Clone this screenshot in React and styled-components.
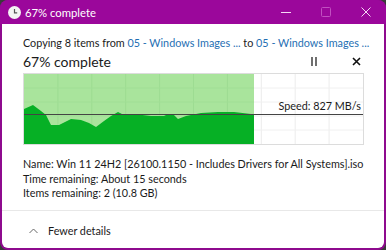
import styled, { createGlobalStyle } from "styled-components";

const GlobalStyle = createGlobalStyle`
    html, body {
        margin: 0;
        padding: 0;
        background: #3a3a3a;
    }
    body {
        width: 386px;
        height: 250px;
        overflow: hidden;
        font-family: Lato, sans-serif;
    }
`;

const speedPoints = [
    [0, 35], [9, 31], [17, 37], [22, 41], [27, 51], [35, 51], [47, 45],
    [57, 46], [65, 49], [72, 53], [80, 47], [87, 42], [94, 38], [100, 41],
    [110, 40], [127, 42], [140, 42], [144, 40], [149, 40], [154, 45],
    [162, 42], [177, 39], [194, 38], [210, 38], [227, 40], [230, 40],
];

export default function App() {
    const progressWidth = 230;
    const area =
        "M" +
        speedPoints.map(([x, y]) => `${x},${y}`).join(" L") +
        ` L${progressWidth},70 L0,70 Z`;

    return (
        <>
            <GlobalStyle />
            <StyledWindow>
                <StyledTitleBar>
                    <StyledTitle>
                        <svg width="13" height="13" viewBox="0 0 13 13">
                            <circle cx="6.5" cy="6.5" r="6.5" fill="#f4f4f4" />
                            <path
                                d="M6.5 3 V6.8 H9.2"
                                stroke="#555"
                                strokeWidth="1.2"
                                fill="none"
                            />
                        </svg>
                        67% complete
                    </StyledTitle>
                    <StyledControls>
                        <StyledControl>
                            <svg width="10" height="10" viewBox="0 0 10 10">
                                <path d="M0 5.5 H10" stroke="#f6d8f6" strokeWidth="1" />
                            </svg>
                        </StyledControl>
                        <StyledControl>
                            <svg width="10" height="10" viewBox="0 0 10 10">
                                <rect
                                    x="0.5"
                                    y="0.5"
                                    width="9"
                                    height="9"
                                    rx="1"
                                    stroke="#c150c1"
                                    fill="none"
                                />
                            </svg>
                        </StyledControl>
                        <StyledControl>
                            <svg width="10" height="10" viewBox="0 0 10 10">
                                <path
                                    d="M0.5 0.5 L9.5 9.5 M9.5 0.5 L0.5 9.5"
                                    stroke="#f6d8f6"
                                    strokeWidth="1"
                                />
                            </svg>
                        </StyledControl>
                    </StyledControls>
                </StyledTitleBar>

                <StyledBody>
                    <StyledMain>
                        <StyledLine>
                            Copying 8 items from{" "}
                            <StyledLink>05 - Windows Images ...</StyledLink> to{" "}
                            <StyledLink>05 - Windows Images ...</StyledLink>
                        </StyledLine>

                        <StyledHeader>
                            <span>67% complete</span>
                            <StyledActions>
                                <svg width="8" height="9" viewBox="0 0 8 9">
                                    <path
                                        d="M2 0 V9 M6 0 V9"
                                        stroke="#222"
                                        strokeWidth="1.3"
                                    />
                                </svg>
                                <svg width="9" height="9" viewBox="0 0 9 9">
                                    <path
                                        d="M1 1 L8 8 M8 1 L1 8"
                                        stroke="#111"
                                        strokeWidth="1.6"
                                    />
                                </svg>
                            </StyledActions>
                        </StyledHeader>

                        <StyledChart>
                            <svg
                                width="339"
                                height="70"
                                viewBox="0 0 339 70"
                                preserveAspectRatio="none"
                            >
                                <rect
                                    x="0"
                                    y="0"
                                    width={progressWidth}
                                    height="70"
                                    fill="#a9e49c"
                                />
                                {[1, 2, 3, 4, 5, 6, 7, 8, 9].map((i) => (
                                    <line
                                        key={"v" + i}
                                        x1={i * 33.9}
                                        x2={i * 33.9}
                                        y1="0"
                                        y2="70"
                                        stroke={i * 33.9 < progressWidth ? "#9ddc92" : "#ececec"}
                                        strokeWidth="1"
                                    />
                                ))}
                                {[14, 28, 42, 56].map((y) => (
                                    <g key={"h" + y}>
                                        <line x1="0" x2={progressWidth} y1={y} y2={y} stroke="#a0de95" />
                                        <line x1={progressWidth} x2="339" y1={y} y2={y} stroke="#f0f0f0" />
                                    </g>
                                ))}
                                <path d={area} fill="#06b025" />
                                <line
                                    x1="0"
                                    x2="339"
                                    y1="40.5"
                                    y2="40.5"
                                    stroke="#444"
                                    strokeWidth="1"
                                />
                            </svg>
                            <StyledSpeed>Speed: 827 MB/s</StyledSpeed>
                        </StyledChart>

                        <StyledDetails>
                            <div>
                                Name: Win 11 24H2 [26100.1150 - Includes Drivers for All
                                Systems].iso
                            </div>
                            <div>Time remaining: About 15 seconds</div>
                            <div>Items remaining: 2 (10.8 GB)</div>
                        </StyledDetails>
                    </StyledMain>

                    <StyledFooter>
                        <svg width="9" height="6" viewBox="0 0 9 6">
                            <path
                                d="M0.5 5 L4.5 1 L8.5 5"
                                stroke="#666"
                                strokeWidth="1"
                                fill="none"
                            />
                        </svg>
                        Fewer details
                    </StyledFooter>
                </StyledBody>
            </StyledWindow>
        </>
    );
}

const StyledWindow = styled.div`
    width: 386px;
    height: 250px;
    box-sizing: border-box;
    background-color: #8e0a8e;
    border-radius: 8px;
    display: flex;
    flex-direction: column;
    padding: 0 2px 2px 2px;
    overflow: hidden;
`;

const StyledTitleBar = styled.div`
    height: 24px;
    flex-shrink: 0;
    display: flex;
    align-items: center;
    justify-content: space-between;
    background-color: #9b079b;
    margin: 0 -2px;
    padding: 0 0 0 8px;
`;

const StyledTitle = styled.div`
    display: flex;
    align-items: center;
    gap: 4px;
    color: #ffffff;
    font-size: 11.3px;
`;

const StyledControls = styled.div`
    display: flex;
    height: 100%;
`;

const StyledControl = styled.div`
    width: 40px;
    height: 100%;
    display: flex;
    align-items: center;
    justify-content: center;
`;

const StyledBody = styled.div`
    flex: 1;
    background-color: #ffffff;
    border-radius: 0 0 6px 6px;
    display: flex;
    flex-direction: column;
`;

const StyledMain = styled.div`
    flex: 1;
    padding: 11px 22px 0 21px;
    border-bottom: 1px solid #e8e8e8;
    color: #1a1a1a;
    font-size: 10.8px;
`;

const StyledLine = styled.div`
    line-height: 16px;
    white-space: nowrap;
`;

const StyledLink = styled.span`
    color: #1f6fb3;
`;

const StyledHeader = styled.div`
    display: flex;
    justify-content: space-between;
    align-items: center;
    font-size: 14px;
    line-height: 20px;
    height: 21px;
`;

const StyledActions = styled.div`
    display: flex;
    align-items: center;
    gap: 34px;
    padding-right: 1px;
`;

const StyledChart = styled.div`
    position: relative;
    width: 339px;
    height: 70px;
    margin-top: 1px;
    border: 1px solid #dcdcdc;
    svg {
        display: block;
    }
`;

const StyledSpeed = styled.span`
    position: absolute;
    right: 2px;
    top: 24px;
    font-size: 10.8px;
    line-height: 15px;
    color: #1a1a1a;
`;

const StyledDetails = styled.div`
    margin-top: 12px;
    line-height: 14.6px;
    white-space: nowrap;
`;

const StyledFooter = styled.div`
    height: 37px;
    flex-shrink: 0;
    display: flex;
    align-items: center;
    gap: 10px;
    padding-left: 27px;
    padding-top: 2px;
    box-sizing: border-box;
    font-size: 10.8px;
    color: #1a1a1a;
`;
